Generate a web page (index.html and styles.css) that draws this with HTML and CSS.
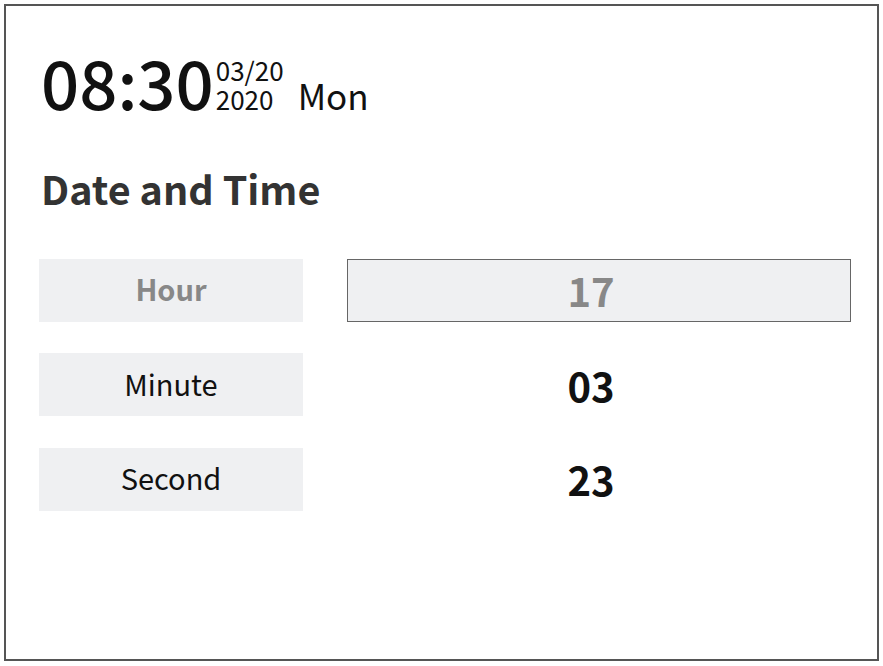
FILE: index.html
```html
<!DOCTYPE html>
<html>
<head>
<meta charset="utf-8">
<link rel="stylesheet" href="styles.css">
</head>
<body>
<div class="frame">
  <div class="clock"><span class="time">08:30</span><span class="date"><span class="date-line">03/20</span><span class="date-line">2020</span></span><span class="day">Mon</span></div>
  <h1 class="title">Date and Time</h1>
  <div class="rows">
    <div class="row">
      <div class="label label-active">Hour</div>
      <div class="value value-active">17</div>
    </div>
    <div class="row">
      <div class="label">Minute</div>
      <div class="value">03</div>
    </div>
    <div class="row">
      <div class="label">Second</div>
      <div class="value">23</div>
    </div>
  </div>
</div>
</body>
</html>
```

FILE: styles.css
```css
html, body {
  margin: 0;
  padding: 0;
  background: #ffffff;
}
body {
  font-family: "Noto Sans CJK SC", "Noto Sans", sans-serif;
  color: #111;
}
.frame {
  box-sizing: border-box;
  margin: 4px 0 0 4px;
  width: 875px;
  height: 657px;
  border: 2px solid #555;
  padding: 41px 0 0 33px;
}
.clock {
  line-height: 1;
  white-space: nowrap;
  margin-left: 2px;
}
.time {
  font-size: 67px;
  font-weight: 500;
  vertical-align: baseline;
}
.date {
  display: inline-block;
  vertical-align: baseline;
  font-size: 26px;
  line-height: 29px;
  margin-left: 2px;
}
.date-line {
  display: block;
}
.day {
  font-size: 35px;
  margin-left: 14px;
  vertical-align: baseline;
}
.title {
  margin: 54px 0 0 2px;
  font-size: 39.5px;
  line-height: 1;
  font-weight: 700;
  color: #333;
}
.rows {
  margin-top: 51px;
  display: flex;
  flex-direction: column;
  gap: 31.5px;
}
.row {
  display: flex;
  align-items: center;
  gap: 44px;
}
.label {
  box-sizing: border-box;
  width: 264px;
  height: 63px;
  padding-bottom: 4px;
  background: #eff0f2;
  display: flex;
  align-items: center;
  justify-content: center;
  font-size: 29px;
  color: #111;
}
.label-active {
  color: #888;
  font-weight: 700;
}
.value {
  box-sizing: border-box;
  width: 504px;
  height: 63px;
  padding-right: 16px;
  display: flex;
  align-items: center;
  justify-content: center;
  font-size: 40px;
  font-weight: 700;
  color: #111;
}
.value-active {
  background: #eff0f2;
  border: 1.5px solid #666;
  color: #888;
}
```
